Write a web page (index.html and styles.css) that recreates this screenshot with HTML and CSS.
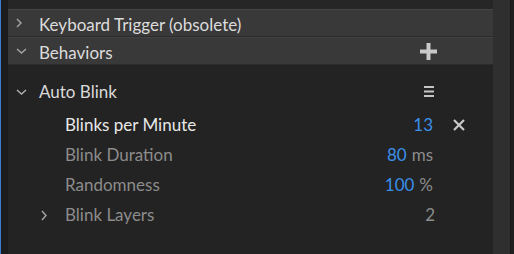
FILE: index.html
```html
<!DOCTYPE html>
<html>
<head>
<meta charset="utf-8">
<link rel="stylesheet" href="styles.css">
</head>
<body>
<div class="app">
  <div class="edge"></div>
  <div class="panel">
    <div class="topstrip"></div>
    <div class="hdr">
      <span class="chev"><svg width="6" height="10" viewBox="0 0 6 10"><path d="M1 1 L5 5 L1 9" fill="none" stroke="#a6a6a6" stroke-width="1.4"/></svg></span>
      <span class="hdr-title">Keyboard Trigger (obsolete)</span>
    </div>
    <div class="hdr">
      <span class="chev"><svg width="11" height="6" viewBox="0 0 11 6"><path d="M1 1 L5.5 5 L10 1" fill="none" stroke="#a6a6a6" stroke-width="1.4"/></svg></span>
      <span class="hdr-title">Behaviors</span>
      <span class="hdr-action"><svg width="17" height="17" viewBox="0 0 17 17"><path d="M6.5 0h4v6.5h6.5v4h-6.5v6.5h-4v-6.5h-6.5v-4h6.5z" fill="#c9c9c9"/></svg></span>
    </div>
    <div class="content">
      <div class="row group">
        <span class="chev"><svg width="11" height="6" viewBox="0 0 11 6"><path d="M1 1 L5.5 5 L10 1" fill="none" stroke="#b0b0b0" stroke-width="1.4"/></svg></span>
        <span class="group-title">Auto Blink</span>
        <span class="menu"><svg width="10" height="11" viewBox="0 0 10 11"><rect x="0" y="0" width="10" height="2" fill="#c4c4c4"/><rect x="0" y="4.5" width="10" height="2" fill="#c4c4c4"/><rect x="0" y="9" width="10" height="2" fill="#c4c4c4"/></svg></span>
      </div>
      <div class="params">
        <div class="row param">
          <span class="subchev"></span>
          <span class="label active">Blinks per Minute</span>
          <span class="value"><span class="num">13</span></span>
          <span class="action"><svg width="12" height="12" viewBox="0 0 12 12"><path d="M1 1 L11 11 M11 1 L1 11" stroke="#c9c9c9" stroke-width="2.2"/></svg></span>
        </div>
        <div class="row param">
          <span class="subchev"></span>
          <span class="label">Blink Duration</span>
          <span class="value"><span class="num">80</span><span class="unit">ms</span></span>
          <span class="action"></span>
        </div>
        <div class="row param">
          <span class="subchev"></span>
          <span class="label">Randomness</span>
          <span class="value"><span class="num">100</span><span class="unit">%</span></span>
          <span class="action"></span>
        </div>
        <div class="row param">
          <span class="subchev"><svg width="6" height="11" viewBox="0 0 6 11"><path d="M1 1 L5 5.5 L1 10" fill="none" stroke="#a6a6a6" stroke-width="1.4"/></svg></span>
          <span class="label">Blink Layers</span>
          <span class="value"><span class="plain">2</span></span>
          <span class="action"></span>
        </div>
      </div>
    </div>
  </div>
  <div class="scroll"></div>
  <div class="rightedge"></div>
</div>
</body>
</html>
```
FILE: styles.css
```css
html, body {
  margin: 0;
  padding: 0;
  background: #232323;
}
body {
  font-family: Lato, "Open Sans", sans-serif;
  font-size: 17px;
  line-height: 20px;
  overflow: hidden;
}
.app {
  display: flex;
  width: 514px;
  height: 254px;
}
.edge {
  width: 7px;
  background: #1c1c1c;
  border-left: 1px solid #3b7ed1;
}
.panel {
  flex: 1;
  display: flex;
  flex-direction: column;
  background: #232323;
}
.topstrip {
  height: 9px;
  background: #262626;
}
.hdr {
  height: 26px;
  display: flex;
  align-items: center;
  background: #393939;
  border-top: 1px solid #454545;
  border-bottom: 1px solid #2b2b2b;
  padding-left: 8px;
  color: #dcdcdc;
}
.hdr + .hdr {
  border-top-color: #434343;
}
.chev {
  width: 23px;
  display: flex;
  align-items: center;
}
.hdr-title {
  flex: 1;
  padding-top: 3px;
}
.hdr-action {
  width: 17px;
  height: 17px;
  margin-right: 56px;
  display: flex;
}
.content {
  padding-top: 12px;
}
.row {
  display: flex;
  align-items: center;
  height: 30px;
  padding-left: 8px;
}
.group {
  color: #dadada;
}
.group-title {
  flex: 1;
}
.menu {
  width: 10px;
  display: flex;
  margin-right: 59px;
  margin-top: -2px;
}
.params {
  padding-top: 3px;
}
.subchev {
  width: 49px;
  display: flex;
  align-items: center;
  padding-left: 25px;
  box-sizing: border-box;
}
.label {
  flex: 1;
  color: #8c8c8c;
}
.label.active {
  color: #e8e8e8;
}
.value {
  display: flex;
  gap: 5px;
}
.num {
  color: #3a8fea;
}
.unit, .plain {
  color: #8c8c8c;
}
.plain {
  margin-right: -2px;
}
.action {
  width: 60px;
  box-sizing: border-box;
  padding-left: 20px;
  display: flex;
  align-items: center;
}
.scroll {
  width: 17px;
  background: #2f2f2f;
  border-right: 1px solid #1a1a1a;
}
.rightedge {
  width: 3px;
  background: #202020;
}
```
